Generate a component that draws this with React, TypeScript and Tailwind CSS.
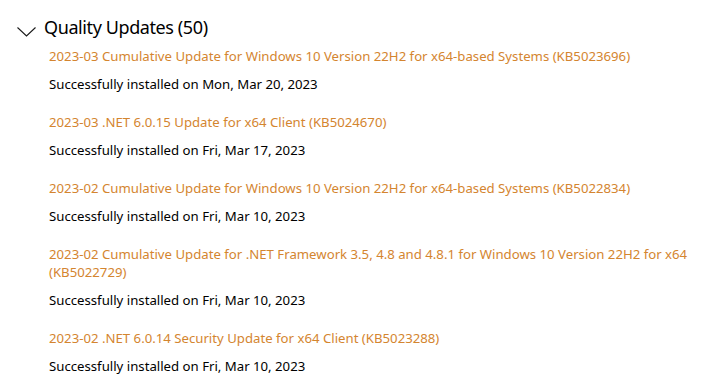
const updates = [
  {
    title: '2023-03 Cumulative Update for Windows 10 Version 22H2 for x64-based Systems (KB5023696)',
    date: 'Mon, Mar 20, 2023',
  },
  { title: '2023-03 .NET 6.0.15 Update for x64 Client (KB5024670)', date: 'Fri, Mar 17, 2023' },
  {
    title: '2023-02 Cumulative Update for Windows 10 Version 22H2 for x64-based Systems (KB5022834)',
    date: 'Fri, Mar 10, 2023',
  },
  {
    title:
      '2023-02 Cumulative Update for .NET Framework 3.5, 4.8 and 4.8.1 for Windows 10 Version 22H2 for x64 (KB5022729)',
    date: 'Fri, Mar 10, 2023',
  },
  { title: '2023-02 .NET 6.0.14 Security Update for x64 Client (KB5023288)', date: 'Fri, Mar 10, 2023' },
]

export default function App() {
  return (
    <div
      className="w-[711px] h-[390px] overflow-hidden bg-white text-black"
      style={{ fontFamily: '"Noto Sans", sans-serif' }}
    >
      {/* section header */}
      <div className="flex items-start pt-[15px] pl-[17px]">
        <svg width="19" height="10" viewBox="0 0 19 10" className="shrink-0 mt-[12px]">
          <path d="M0.5 0.5 L9.5 9 L18.5 0.5" fill="none" stroke="#1a1a1a" strokeWidth="1.1" />
        </svg>
        <h2 className="ml-[8px] text-[18px] leading-[24px] tracking-[-0.4px] text-black">Quality Updates (50)</h2>
      </div>

      {/* update history */}
      <div className="pl-[49px] pr-[10px] pt-[8px] flex flex-col gap-[20px]">
        {updates.map((u, i) => (
          <div key={i} className="flex flex-col gap-[10px] text-[13.2px] leading-[18px]">
            <a className="text-[#d4852f] cursor-pointer">{u.title}</a>
            <p className="text-black">Successfully installed on {u.date}</p>
          </div>
        ))}
      </div>
    </div>
  )
}
